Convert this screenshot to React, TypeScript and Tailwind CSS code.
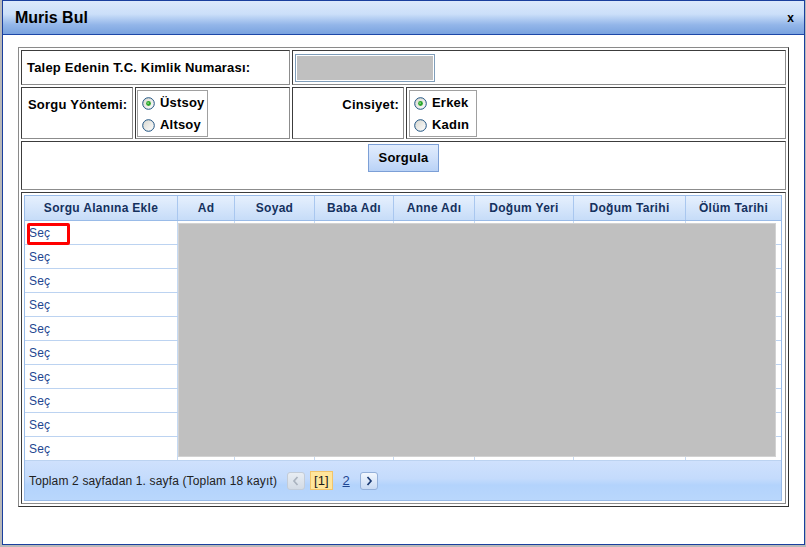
import React from 'react'

const headers = [
  'Sorgu Alanına Ekle',
  'Ad',
  'Soyad',
  'Baba Adı',
  'Anne Adı',
  'Doğum Yeri',
  'Doğum Tarihi',
  'Ölüm Tarihi',
]

const cell =
  'border border-t-[#3c3c3c] border-l-[#3c3c3c] border-r-[#8c8c8c] border-b-[#8c8c8c]'

function Radio({ checked = false }: { checked?: boolean }) {
  return (
    <svg width="13" height="13" viewBox="0 0 13 13" className="shrink-0">
      <defs>
        <linearGradient id="radioFill" x1="0" y1="0" x2="1" y2="1">
          <stop offset="0" stopColor="#d6d6ce" />
          <stop offset="1" stopColor="#ffffff" />
        </linearGradient>
      </defs>
      <circle cx="6.5" cy="6.5" r="5.8" fill="url(#radioFill)" stroke="#1d5281" strokeWidth="1" />
      {checked && <circle cx="6.5" cy="6.5" r="2.4" fill="#2aa52a" />}
      {checked && <circle cx="6.1" cy="6.1" r="0.9" fill="#8ee08e" />}
    </svg>
  )
}

function RadioBox({ items, width, ml }: { items: [string, boolean][]; width: string; ml: string }) {
  return (
    <div className={`${width} ${ml} mt-[2px] h-[47px] border border-[#a0a0a0] flex flex-col pl-[4px] pt-[1px]`}>
      {items.map(([label, checked]) => (
        <div key={label} className="h-[22px] flex items-center gap-[5px] text-[13px] font-bold leading-[16px] tracking-[0.2px] text-black">
          <Radio checked={checked} />
          <span>{label}</span>
        </div>
      ))}
    </div>
  )
}

function Chevron({ dir, color }: { dir: 'left' | 'right'; color: string }) {
  return (
    <svg width="8" height="10" viewBox="0 0 8 10">
      <path
        d={dir === 'left' ? 'M5.5 1 L2 5 L5.5 9' : 'M2.5 1 L6 5 L2.5 9'}
        fill="none"
        stroke={color}
        strokeWidth="1.7"
      />
    </svg>
  )
}

function ResultGrid() {
  const cols = 'grid grid-cols-[153px_57px_80px_79px_81px_99px_112px_1fr]'
  return (
    <div className="w-[758px] border border-[#99bbe8] flex flex-col">
      <div className={`${cols} h-[25px] border-b border-[#99bbe8] bg-[linear-gradient(to_bottom,#e6f0fd,#d6e6fb_50%,#c6dcf8)]`}>
        {headers.map((h, i) => (
          <div
            key={h}
            className={
              'flex items-center justify-center text-[12px] font-bold tracking-[0.3px] text-[#15315e] ' +
              (i < 7 ? 'border-r border-[#a9c7ef]' : '')
            }
          >
            {h}
          </div>
        ))}
      </div>

      <div className="relative">
        {Array.from({ length: 10 }).map((_, r) => (
          <div key={r} className={`${cols} h-[24px] border-b border-[#bcd3f1]`}>
            {headers.map((h, i) => (
              <div
                key={h}
                className={
                  'bg-white flex items-center ' + (i < 7 ? 'border-r border-[#c6daf3]' : '')
                }
              >
                {i === 0 && <span className="pl-[4px] text-[12px] tracking-[0.2px] text-[#1e4691]">Seç</span>}
              </div>
            ))}
          </div>
        ))}
        <div className="absolute left-[153px] top-[2px] w-[598px] h-[234px] bg-[#c0c0c0] border border-[#d2d2d2]" />
        <div className="absolute left-[2px] top-[2px] w-[43px] h-[22px] border-[3px] border-[#ff0000] rounded-[2px]" />
      </div>

      <div className="h-[39px] flex items-center pl-[4px] text-[12px] text-[#222] bg-[linear-gradient(to_bottom,#cfe1fd_0%,#c4dbfc_45%,#b3d3fc_62%,#b9d7fc_100%)]">
        <span className="tracking-[0.15px]">Toplam 2 sayfadan 1. sayfa (Toplam 18 kayıt)</span>
        <div className="ml-[10px] w-[18px] h-[18px] rounded-[3px] border border-[#c3ccd8] bg-[linear-gradient(to_bottom,#e8edf3,#d3dbe5)] flex items-center justify-center">
          <Chevron dir="left" color="#aab3bf" />
        </div>
        <div className="ml-[5px] h-[19px] px-[3px] border border-[#f2c46a] bg-[#ffe59c] flex items-center text-[13px] text-[#1a1a1a]">
          [1]
        </div>
        <span className="ml-[10px] text-[13px] text-[#1e4691] underline">2</span>
        <div className="ml-[10px] w-[18px] h-[18px] rounded-[3px] border border-[#94b0d9] bg-[linear-gradient(to_bottom,#f2f7fe,#c8daf4)] flex items-center justify-center">
          <Chevron dir="right" color="#1b3a72" />
        </div>
      </div>
    </div>
  )
}

export default function App() {
  return (
    <div className="w-[806px] h-[547px] bg-[#b9b9b9] pl-[2px] font-['Liberation_Sans',Arial,sans-serif]">
      <div className="w-[803px] h-[545px] border border-[#1a3f9e] bg-white flex flex-col">
        <div className="h-[34px] shrink-0 border-b border-[#1d48a8] bg-[linear-gradient(to_bottom,#dce9fc_0%,#cbdff9_40%,#93b6e9_72%,#7aa3df_100%)] flex items-center justify-between pl-[12px] pr-[10px]">
          <span className="text-[16px] font-bold text-black">Muris Bul</span>
          <span className="text-[12px] font-bold text-black">x</span>
        </div>

        <div className="ml-[15px] mt-[12px] w-[771px] h-[460px] border border-t-[#8a8a8a] border-l-[#8a8a8a] border-r-[#333] border-b-[#333] p-[2px] grid grid-cols-[112px_155px_112px_380px] grid-rows-[35px_52px_49px_312px] gap-[2px]">
          <div className={`${cell} col-span-2 flex items-center pl-[5px] text-[13px] font-bold tracking-[0.2px] text-black`}>
            Talep Edenin T.C. Kimlik Numarası:
          </div>
          <div className={`${cell} col-span-2 flex items-center pl-[2px]`}>
            <div className="w-[140px] h-[28px] border border-[#7f9db9] bg-white p-[1px]">
              <div className="w-full h-full bg-[#c0c0c0]" />
            </div>
          </div>

          <div className={`${cell} pl-[6px] pt-[9px] text-[13px] font-bold leading-[16px] tracking-[0.2px] text-black`}>
            Sorgu Yöntemi:
          </div>
          <div className={cell}>
            <RadioBox items={[['Üstsoy', true], ['Altsoy', false]]} width="w-[71px]" ml="ml-[1px]" />
          </div>
          <div className={`${cell} pr-[4px] pt-[9px] text-right text-[13px] font-bold leading-[16px] tracking-[0.2px] text-black`}>
            Cinsiyet:
          </div>
          <div className={cell}>
            <RadioBox items={[['Erkek', true], ['Kadın', false]]} width="w-[68px]" ml="ml-[2px]" />
          </div>

          <div className={`${cell} col-span-4 flex justify-center items-start pt-[2px]`}>
            <button className="w-[71px] h-[28px] border border-[#7c9fd6] bg-[linear-gradient(to_bottom,#e1ecfd,#cfe0fa_50%,#b9d2f6)] text-[13px] font-bold tracking-[0.2px] text-black">
              Sorgula
            </button>
          </div>

          <div className={`${cell} col-span-4 p-[2px]`}>
            <ResultGrid />
          </div>
        </div>
      </div>
    </div>
  )
}
